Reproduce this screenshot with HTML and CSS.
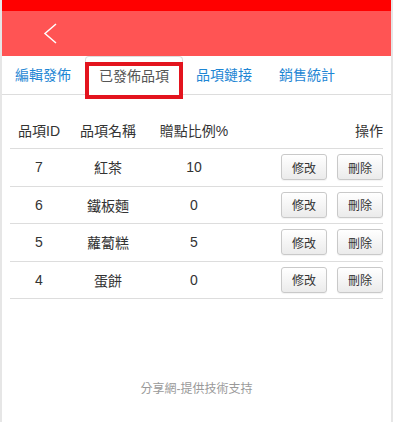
FILE: index.html
```html
<!DOCTYPE html>
<html lang="zh-Hant">
<head>
<meta charset="utf-8">
<link rel="stylesheet" href="styles.css">
</head>
<body>
<div class="page">
  <div class="topband"></div>
  <header class="header">
    <svg class="back" width="14" height="22" viewBox="0 0 14 22"><polyline points="13,1 2,10.5 13,20" fill="none" stroke="#fff" stroke-width="1.5"/></svg>
  </header>
  <nav class="tabs">
    <span class="tab">編輯發佈</span>
    <span class="tab active">已發佈品項</span>
    <span class="tab">品項鏈接</span>
    <span class="tab">銷售統計</span>
  </nav>
  <div class="table">
    <div class="row head">
      <span class="c">品項ID</span>
      <span class="c">品項名稱</span>
      <span class="c">贈點比例%</span>
      <span class="ops">操作</span>
    </div>
    <div class="row">
      <span class="c">7</span><span class="c">紅茶</span><span class="c">10</span>
      <span class="ops"><button class="btn">修改</button><button class="btn">刪除</button></span>
    </div>
    <div class="row">
      <span class="c">6</span><span class="c">鐵板麵</span><span class="c">0</span>
      <span class="ops"><button class="btn">修改</button><button class="btn">刪除</button></span>
    </div>
    <div class="row">
      <span class="c">5</span><span class="c">蘿蔔糕</span><span class="c">5</span>
      <span class="ops"><button class="btn">修改</button><button class="btn">刪除</button></span>
    </div>
    <div class="row">
      <span class="c">4</span><span class="c">蛋餅</span><span class="c">0</span>
      <span class="ops"><button class="btn">修改</button><button class="btn">刪除</button></span>
    </div>
  </div>
  <footer class="footer">分享網-提供技術支持</footer>
</div>
</body>
</html>
```
FILE: styles.css
```css
html, body {
  margin: 0;
  padding: 0;
  background: #fff;
}
body {
  font-family: "Liberation Sans", "Noto Sans CJK TC", sans-serif;
  font-size: 14px;
  color: #333;
}
.page {
  box-sizing: border-box;
  width: 393px;
  min-height: 422px;
  border-left: 2px solid #e6e6e6;
  border-right: 2px solid #e6e6e6;
}
.topband {
  height: 11px;
  background: #ff0000;
}
.header {
  height: 45px;
  background: #ff5454;
  display: flex;
  align-items: center;
}
.back {
  display: block;
  margin-left: 41px;
  margin-top: 1px;
}
.tabs {
  display: flex;
  height: 38px;
  border-bottom: 1px solid #dddddd;
  padding-left: 0;
}
.tab {
  display: flex;
  align-items: center;
  padding: 0 14px 0 13px;
  color: #1e86d4;
  line-height: 1;
}
.tab.active {
  position: relative;
  color: #555;
  padding: 0 13px 0 13px;
  margin-left: 0;
  border: 1px solid #dddddd;
  border-bottom: none;
  border-radius: 4px 4px 0 0;
  background: #fff;
  margin-bottom: -1px;
}
.tab.active::after {
  content: "";
  position: absolute;
  left: -1px;
  right: -1px;
  top: 5px;
  bottom: -4px;
  border: 4px solid #e3141e;
}
.table {
  margin: 16px 8px 0 8px;
}
.row {
  display: grid;
  grid-template-columns: 58px 80px 92px 1fr;
  align-items: center;
  height: 36.5px;
  border-bottom: 1px solid #dddddd;
}
.row.head {
  height: 37px;
}
.c {
  text-align: center;
}
.ops {
  display: flex;
  justify-content: flex-end;
  gap: 10px;
}
.btn {
  box-sizing: border-box;
  width: 46px;
  height: 26px;
  padding: 0;
  font-family: "Liberation Sans", "Noto Sans CJK TC", sans-serif;
  font-size: 12px;
  color: #333;
  background: linear-gradient(#ffffff, #ebebeb);
  border: 1px solid #c9c9c9;
  border-radius: 3px;
  box-shadow: 0 1px 1px rgba(0,0,0,0.05);
}
.footer {
  margin-top: 82px;
  text-align: center;
  font-size: 12px;
  line-height: 16px;
  color: #999;
}
```
